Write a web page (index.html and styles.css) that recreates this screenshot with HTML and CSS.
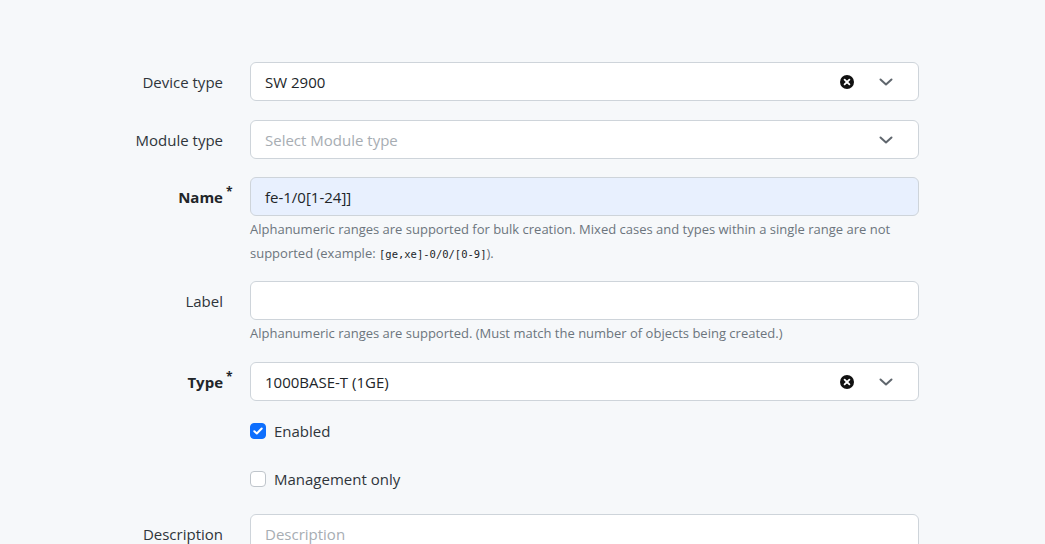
FILE: index.html
```html
<!DOCTYPE html>
<html lang="en">
<head>
<meta charset="utf-8">
<title>Module bay form</title>
<link rel="stylesheet" href="styles.css">
</head>
<body>
<form class="form">
  <div class="row r-device">
    <label class="lbl">Device type</label>
    <div class="field">
      <div class="control select">
        <span class="value">SW 2900</span>
        <span class="icons">
          <svg class="clear" width="14" height="14" viewBox="0 0 14 14"><circle cx="7" cy="7" r="7" fill="#111"/><path d="M4.6 4.6 9.4 9.4M9.4 4.6 4.6 9.4" stroke="#fff" stroke-width="1.8" stroke-linecap="round"/></svg>
          <svg class="chev" width="14" height="10" viewBox="0 0 14 10"><path d="M1.5 2.5 7 7.5 12.5 2.5" fill="none" stroke="#5f666d" stroke-width="2" stroke-linecap="round" stroke-linejoin="round"/></svg>
        </span>
      </div>
    </div>
  </div>
  <div class="row r-module">
    <label class="lbl">Module type</label>
    <div class="field">
      <div class="control select">
        <span class="value placeholder">Select Module type</span>
        <span class="icons">
          <svg class="chev" width="14" height="10" viewBox="0 0 14 10"><path d="M1.5 2.5 7 7.5 12.5 2.5" fill="none" stroke="#5f666d" stroke-width="2" stroke-linecap="round" stroke-linejoin="round"/></svg>
        </span>
      </div>
    </div>
  </div>
  <div class="row r-name">
    <label class="lbl req"><span class="ltext">Name<sup>*</sup></span></label>
    <div class="field">
      <div class="control autofill"><span class="value">fe-1/0[1-24]]</span></div>
      <div class="help">Alphanumeric ranges are supported for bulk creation. Mixed cases and types within a single range are not supported (example: <code>[ge,xe]-0/0/[0-9]</code>).</div>
    </div>
  </div>
  <div class="row r-label">
    <label class="lbl">Label</label>
    <div class="field">
      <div class="control"><span class="value"></span></div>
      <div class="help">Alphanumeric ranges are supported. (Must match the number of objects being created.)</div>
    </div>
  </div>
  <div class="row r-type">
    <label class="lbl req"><span class="ltext">Type<sup>*</sup></span></label>
    <div class="field">
      <div class="control select">
        <span class="value">1000BASE-T (1GE)</span>
        <span class="icons">
          <svg class="clear" width="14" height="14" viewBox="0 0 14 14"><circle cx="7" cy="7" r="7" fill="#111"/><path d="M4.6 4.6 9.4 9.4M9.4 4.6 4.6 9.4" stroke="#fff" stroke-width="1.8" stroke-linecap="round"/></svg>
          <svg class="chev" width="14" height="10" viewBox="0 0 14 10"><path d="M1.5 2.5 7 7.5 12.5 2.5" fill="none" stroke="#5f666d" stroke-width="2" stroke-linecap="round" stroke-linejoin="round"/></svg>
        </span>
      </div>
    </div>
  </div>
  <div class="row r-enabled">
    <span class="spacer"></span>
    <div class="field check">
      <span class="box checked"><svg width="10" height="8" viewBox="0 0 10 8"><path d="M1.3 4.2 3.8 6.5 8.7 1.5" fill="none" stroke="#fff" stroke-width="2" stroke-linecap="round" stroke-linejoin="round"/></svg></span>
      <span class="ctext">Enabled</span>
    </div>
  </div>
  <div class="row r-mgmt">
    <span class="spacer"></span>
    <div class="field check">
      <span class="box"></span>
      <span class="ctext">Management only</span>
    </div>
  </div>
  <div class="row r-desc">
    <label class="lbl">Description</label>
    <div class="field">
      <div class="control"><span class="value placeholder">Description</span></div>
    </div>
  </div>
</form>
</body>
</html>
```

FILE: styles.css
```css
html, body {
  margin: 0;
  padding: 0;
  background: #f6f8fa;
  font-family: "Open Sans", "Noto Sans", "Liberation Sans", sans-serif;
  font-size: 15px;
  color: #212529;
  overflow: hidden;
}

.form {
  padding-top: 62px;
}

.row {
  display: grid;
  grid-template-columns: 223px 669px;
  column-gap: 27px;
  align-items: start;
}

.lbl {
  text-align: right;
  line-height: 40px;
  height: 39px;
  color: #2f353b;
  white-space: nowrap;
}

.lbl.req {
  font-weight: 700;
  color: #212529;
}

.ltext {
  position: relative;
}

.lbl sup {
  position: absolute;
  left: 100%;
  top: -1px;
  margin-left: 3px;
  font-size: 12px;
  line-height: 1;
}

.control {
  box-sizing: border-box;
  height: 39px;
  border: 1px solid #ced4da;
  border-radius: 6px;
  background: #fff;
  display: flex;
  align-items: center;
  padding: 0 14px;
}

.control.autofill {
  background: #e8f0fe;
}

.value {
  flex: 1;
  white-space: nowrap;
}

.placeholder {
  color: #a7adb3;
}

.icons {
  display: flex;
  align-items: center;
}

.clear {
  margin-right: 25px;
}

.chev {
  margin-right: 11px;
}

.help {
  font-size: 13px;
  line-height: 24px;
  color: #6c757d;
  margin-top: 1px;
}

.help code {
  font-family: "DejaVu Sans Mono", "Liberation Mono", monospace;
  font-size: 10.5px;
  line-height: 1;
  color: #212529;
}

.check {
  display: flex;
  align-items: center;
  height: 24px;
}

.box {
  box-sizing: border-box;
  width: 16px;
  height: 16px;
  border: 1px solid #bfc5cb;
  border-radius: 4px;
  background: #fff;
  margin-right: 8px;
  display: flex;
  align-items: center;
  justify-content: center;
}

.box.checked {
  background: #0d6efd;
  border-color: #0d6efd;
}

.ctext {
  color: #2f353b;
}

.r-device { margin-bottom: 19px; }
.r-module { margin-bottom: 18px; }
.r-name { margin-bottom: 16px; }
.r-label { margin-bottom: 17px; }
.r-type { margin-bottom: 18px; }
.r-enabled { margin-bottom: 24px; }
.r-mgmt { margin-bottom: 23px; }
```
